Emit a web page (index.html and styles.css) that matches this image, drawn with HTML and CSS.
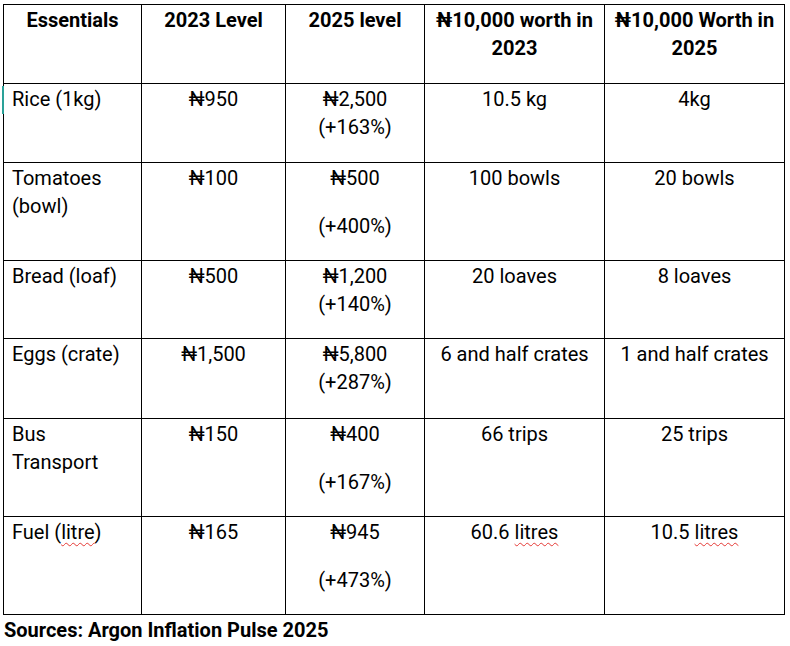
FILE: index.html
```html
<!DOCTYPE html>
<html>
<head>
<meta charset="utf-8">
<link rel="stylesheet" href="styles.css">
</head>
<body>
<div class="page">
  <table class="data">
    <colgroup>
      <col class="c1"><col class="c2"><col class="c3"><col class="c4"><col class="c5">
    </colgroup>
    <thead>
      <tr>
        <th>Essentials</th>
        <th>2023 Level</th>
        <th>2025 level</th>
        <th>₦10,000 worth in 2023</th>
        <th>₦10,000 Worth in 2025</th>
      </tr>
    </thead>
    <tbody>
      <tr class="r-rice">
        <td class="name"><span class="caret"></span>Rice (1kg)</td>
        <td>₦950</td>
        <td><p>₦2,500</p><p>(+163%)</p></td>
        <td>10.5 kg</td>
        <td>4kg</td>
      </tr>
      <tr>
        <td class="name">Tomatoes (bowl)</td>
        <td>₦100</td>
        <td><p class="gap">₦500</p><p>(+400%)</p></td>
        <td>100 bowls</td>
        <td>20 bowls</td>
      </tr>
      <tr>
        <td class="name">Bread (loaf)</td>
        <td>₦500</td>
        <td><p>₦1,200</p><p>(+140%)</p></td>
        <td>20 loaves</td>
        <td>8 loaves</td>
      </tr>
      <tr class="r-eggs">
        <td class="name">Eggs (crate)</td>
        <td>₦1,500</td>
        <td><p>₦5,800</p><p>(+287%)</p></td>
        <td>6 and half crates</td>
        <td>1 and half crates</td>
      </tr>
      <tr>
        <td class="name">Bus<br>Transport</td>
        <td>₦150</td>
        <td><p class="gap">₦400</p><p>(+167%)</p></td>
        <td>66 trips</td>
        <td>25 trips</td>
      </tr>
      <tr class="r-fuel">
        <td class="name">Fuel (<span class="spell">litre</span>)</td>
        <td>₦165</td>
        <td><p class="gap">₦945</p><p>(+473%)</p></td>
        <td>60.6 <span class="spell">litres</span></td>
        <td>10.5 <span class="spell">litres</span></td>
      </tr>
    </tbody>
  </table>
  <p class="source">Sources: Argon Inflation Pulse 2025</p>
</div>
</body>
</html>
```

FILE: styles.css
```css
html, body {
  margin: 0;
  padding: 0;
  background: #ffffff;
}

body {
  font-family: Roboto, "Liberation Sans", Arial, sans-serif;
  color: #000000;
  font-size: 20px;
  line-height: 28px;
}

.page {
  padding: 4px 0 0 3px;
}

.data {
  border-collapse: collapse;
  table-layout: fixed;
  width: 781px;
}

.c1 { width: 138px; }
.c2 { width: 144px; }
.c3 { width: 139px; }
.c4 { width: 180px; }
.c5 { width: 180px; }

.data th,
.data td {
  border: 1px solid #000000;
  padding: 1px 4px 20px;
  vertical-align: top;
  text-align: center;
  font-size: 20px;
  line-height: 28px;
}

.data th {
  font-weight: 700;
  padding-bottom: 21px;
}

.data td.name {
  text-align: left;
  padding-left: 8px;
  position: relative;
}

.data td p {
  margin: 0;
}

.data td p.gap {
  margin-bottom: 20px;
}

.r-rice td {
  height: 57px;
}

.r-eggs td {
  height: 58px;
}

.caret {
  position: absolute;
  left: -2px;
  top: 2px;
  width: 2px;
  height: 28px;
  background: #2aa198;
}

.spell {
  text-decoration: underline wavy #e53935;
  text-decoration-thickness: 1px;
  text-underline-offset: 3px;
  text-decoration-skip-ink: none;
}

.source {
  margin: 3px 0 0 1px;
  font-weight: 700;
  font-size: 20px;
  line-height: 24px;
}
```
